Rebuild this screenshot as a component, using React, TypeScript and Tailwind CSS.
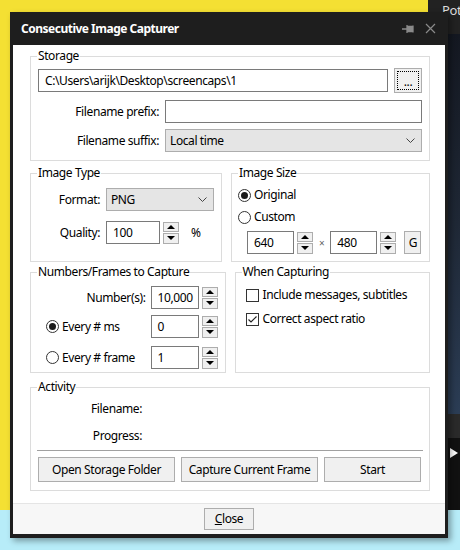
import React from 'react';

const font = "font-['Noto_Sans','Liberation_Sans',sans-serif]";

function Spinner() {
  return (
    <div className="flex flex-col gap-[1px] w-[16px] h-[22px] ml-[3px]">
      <div className="flex-1 border border-[#adadad] bg-[#f0f0f0] flex items-center justify-center">
        <div className="w-0 h-0 border-l-[4px] border-r-[4px] border-b-[4px] border-l-transparent border-r-transparent border-b-black" />
      </div>
      <div className="flex-1 border border-[#adadad] bg-[#f0f0f0] flex items-center justify-center">
        <div className="w-0 h-0 border-l-[4px] border-r-[4px] border-t-[4px] border-l-transparent border-r-transparent border-t-black" />
      </div>
    </div>
  );
}

function NumberBox({ value, width }: { value: string; width: string }) {
  return (
    <div className="flex items-center">
      <div className={`${width} h-[23px] border border-[#7a7a7a] bg-white flex items-center px-[6px]`}>{value}</div>
      <Spinner />
    </div>
  );
}

function Radio({ checked, label }: { checked?: boolean; label: string }) {
  return (
    <div className="flex items-center gap-[3px] h-[16px]">
      <div className="w-[13px] h-[13px] rounded-full border border-[#333] bg-white flex items-center justify-center">
        {checked && <div className="w-[7px] h-[7px] rounded-full bg-[#1a1a1a]" />}
      </div>
      <span>{label}</span>
    </div>
  );
}

function Check({ checked, label }: { checked?: boolean; label: string }) {
  return (
    <div className="flex items-center gap-[4px] h-[16px]">
      <div className="w-[13px] h-[13px] border border-[#333] bg-white flex items-center justify-center">
        {checked && (
          <svg width="11" height="11" viewBox="0 0 11 11">
            <path d="M1.5 5.5 L4 8 L9.5 2.5" stroke="#222" strokeWidth="1.2" fill="none" />
          </svg>
        )}
      </div>
      <span>{label}</span>
    </div>
  );
}

function Select({ value, width }: { value: string; width: string }) {
  return (
    <div className={`${width} h-[23px] border border-[#adadad] bg-[#e5e5e5] flex items-center justify-between pl-[4px] pr-[6px]`}>
      <span>{value}</span>
      <svg width="9" height="6" viewBox="0 0 9 6">
        <path d="M0.5 0.5 L4.5 4.5 L8.5 0.5" stroke="#444" strokeWidth="1" fill="none" />
      </svg>
    </div>
  );
}

function Group({ title, className, inner, children }: { title: string; className?: string; inner?: string; children: React.ReactNode }) {
  return (
    <fieldset className={`border border-[#dcdcdc] ${className ?? ''}`}>
      <legend className="ml-[6px] px-[1px] h-[16px]">{title}</legend>
      <div className={inner}>{children}</div>
    </fieldset>
  );
}

function Btn({ label, className }: { label: React.ReactNode; className?: string }) {
  return (
    <div className={`h-[25px] border border-[#adadad] bg-[#f0f0f0] flex items-center justify-center ${className ?? ''}`}>
      {label}
    </div>
  );
}

export default function App() {
  return (
    <div className={`relative w-[460px] h-[550px] overflow-hidden bg-[#f4e033] ${font} text-[12px] leading-[16px] tracking-[-0.4px] text-black`}>
      {/* desktop behind the dialog */}
      <div className="absolute left-[428px] top-0 w-[40px] h-[510px] bg-[#111]">
        <div className="h-[34px] bg-[#222] text-[#ddd] text-[13px] pl-[14px] pt-[2px]">Pot</div>
        <div className="h-[380px] bg-gradient-to-b from-[#141821] via-[#1f2836] to-[#2b3d55]" />
        <div className="h-[24px] bg-[#2a2a2a]" />
        <div className="flex items-center pl-[22px] h-[30px]">
          <div className="w-0 h-0 border-t-[5px] border-b-[5px] border-l-[8px] border-t-transparent border-b-transparent border-l-white" />
        </div>
      </div>
      <div className="absolute left-0 bottom-0 w-full h-[40px] bg-[#b7ecf8]" />

      {/* dialog */}
      <div className="absolute left-[10px] top-[12px] w-[438px] h-[526px] bg-[#1e1e1e] px-[3px] pb-[4px] flex flex-col shadow-[3px_3px_6px_rgba(0,0,0,0.35)]">
        <div className="h-[33px] flex items-center justify-between pl-[8px] pr-[9px]">
          <span className="text-white font-bold text-[12px] tracking-[-0.5px]">Consecutive Image Capturer</span>
          <div className="flex items-center gap-[10px]">
            <svg width="13" height="10" viewBox="0 0 13 10">
              <path d="M0 5 H5 M5 1 V9 M5 2.5 H11 V7.5 H5 Z M11 1.5 V8.5" stroke="#8a8a8a" strokeWidth="1.3" fill="#8a8a8a" />
            </svg>
            <svg width="11" height="11" viewBox="0 0 11 11">
              <path d="M1 1 L10 10 M10 1 L1 10" stroke="#8a8a8a" strokeWidth="1.2" />
            </svg>
          </div>
        </div>

        <div className="flex-1 bg-white flex flex-col">
          <div className="flex-1 flex flex-col pl-[17px] pr-[15px] pt-[3px]">
            <Group title="Storage" inner="px-[7px] pt-[4px] pb-[8px]">
              <div className="flex items-center gap-[6px]">
                <div className="flex-1 h-[23px] border border-[#7a7a7a] flex items-center px-[6px]">C:\Users\arijk\Desktop\screencaps\1</div>
                <div className="w-[28px] h-[25px] border border-[#adadad] bg-[#f0f0f0] p-[2px]">
                  <div className="w-full h-full border border-dotted border-black flex items-end justify-center leading-[14px]">...</div>
                </div>
              </div>
              <div className="flex items-center mt-[7px]">
                <span className="w-[127px] text-right pr-[6px]">Filename prefix:</span>
                <div className="flex-1 h-[23px] border border-[#7a7a7a]" />
              </div>
              <div className="flex items-center mt-[6px]">
                <span className="w-[127px] text-right pr-[6px]">Filename suffix:</span>
                <Select value="Local time" width="flex-1" />
              </div>
            </Group>

            <div className="flex gap-[9px] mt-[4px]">
              <Group title="Image Type" className="w-[196px] h-[97px]" inner="px-[7px] pt-[7px]">
                <div className="flex items-center">
                  <span className="w-[68px] text-right pr-[6px]">Format:</span>
                  <Select value="PNG" width="w-[108px]" />
                </div>
                <div className="flex items-center mt-[10px]">
                  <span className="w-[68px] text-right pr-[6px]">Quality:</span>
                  <NumberBox value="100" width="w-[54px]" />
                  <span className="ml-[12px]">%</span>
                </div>
              </Group>
              <Group title="Image Size" className="w-[196px] h-[97px]" inner="pl-[6px] pr-[8px] pt-[6px]">
                <Radio checked label="Original" />
                <div className="mt-[6px]">
                  <Radio label="Custom" />
                </div>
                <div className="flex items-center mt-[6px] pl-[9px]">
                  <NumberBox value="640" width="w-[47px]" />
                  <span className="mx-[6px] text-[#666] text-[10px]">×</span>
                  <NumberBox value="480" width="w-[47px]" />
                  <div className="ml-[8px] w-[17px] h-[23px] border border-[#adadad] bg-[#f0f0f0] flex items-center justify-center">G</div>
                </div>
              </Group>
            </div>

            <div className="flex gap-[9px] mt-[2px]">
              <Group title="Numbers/Frames to Capture" className="w-[196px] h-[109px]" inner="pl-[15px] pr-[7px] pt-[6px]">
                <div className="flex items-center justify-end">
                  <span className="pr-[5px]">Number(s):</span>
                  <NumberBox value="10,000" width="w-[48px]" />
                </div>
                <div className="flex items-center justify-between mt-[6px]">
                  <Radio checked label="Every # ms" />
                  <NumberBox value="0" width="w-[48px]" />
                </div>
                <div className="flex items-center justify-between mt-[8px]">
                  <Radio label="Every # frame" />
                  <NumberBox value="1" width="w-[48px]" />
                </div>
              </Group>
              <Group title="When Capturing" className="w-[196px] h-[109px]" inner="pl-[10px] pt-[7px]">
                <Check label="Include messages, subtitles" />
                <div className="mt-[8px]">
                  <Check checked label="Correct aspect ratio" />
                </div>
              </Group>
            </div>

            <Group title="Activity" className="mt-[6px]" inner="px-[6px] pt-[6px] pb-[8px]">
              <div className="flex flex-col gap-[11px] pl-[10px]">
                <span className="w-[95px] text-right">Filename:</span>
                <span className="w-[95px] text-right">Progress:</span>
              </div>
              <div className="border-t border-[#a0a0a0] mt-[6px] mb-[6px]" />
              <div className="flex gap-[6px] pl-[1px] pr-[2px]">
                <Btn label="Open Storage Folder" className="w-[137px]" />
                <Btn label="Capture Current Frame" className="w-[137px]" />
                <Btn label="Start" className="flex-1" />
              </div>
            </Group>
          </div>

          <div className="h-[31px] border-t border-[#e5e5e5] bg-[#f7f7f7] flex items-center justify-center">
            <div className="w-[50px] h-[22px] border border-[#adadad] bg-[#f0f0f0] flex items-center justify-center">
              <span><span className="underline">C</span>lose</span>
            </div>
          </div>
        </div>
      </div>
    </div>
  );
}
